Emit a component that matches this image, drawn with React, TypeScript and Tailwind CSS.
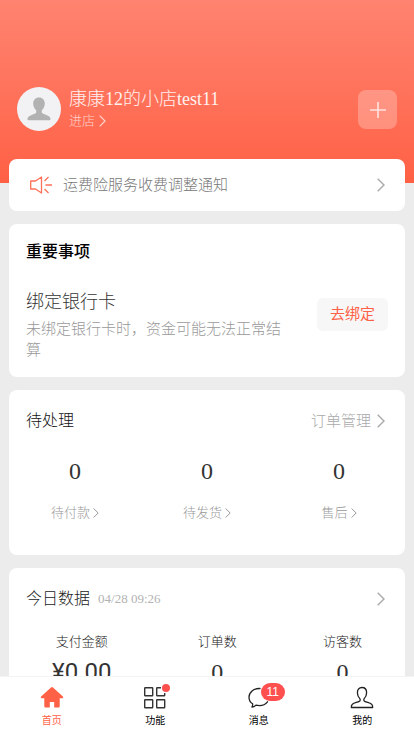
import type { ReactNode } from "react";

const pending = ["待付款", "待发货", "售后"];

function Chevron({ className }: { className: string }) {
  return (
    <svg viewBox="0 0 8 14" fill="none" stroke="currentColor" className={className}>
      <path d="M0.7 0.7 7 7 0.7 13.3" strokeWidth="1.4" />
    </svg>
  );
}

function Stat({ label, children }: { label: string; children: ReactNode }) {
  return (
    <div className="flex flex-col items-center">
      <span className="text-[13px] leading-5 text-[#222]">{label}</span>
      {children}
    </div>
  );
}

function Tab({
  label,
  active,
  children,
}: {
  label: string;
  active?: boolean;
  children: ReactNode;
}) {
  return (
    <a
      href="#"
      className={
        active
          ? "flex flex-1 flex-col items-center pt-2 text-[#ff6146]"
          : "flex flex-1 flex-col items-center pt-2 text-black"
      }
    >
      <span className="relative h-6 w-6">{children}</span>
      <span className="mt-1 text-[10px] leading-4">{label}</span>
    </a>
  );
}

export default function App() {
  return (
    <div className="flex h-screen flex-col bg-[#ececec] font-['Liberation_Serif','Noto_Sans_CJK_SC',serif] font-light">
      <div className="min-h-0 flex-1 overflow-y-auto [scrollbar-width:none]">
        {/* Shop header */}
        <header className="flex h-[183px] items-start bg-linear-to-b from-[#ff8370] to-[#ff6044] px-[17px] pt-[87px] text-white">
          <span className="flex h-11 w-11 items-center justify-center rounded-full bg-[#f2f2f4]">
            <svg viewBox="0 0 24 24" fill="#b2b2b2" className="h-6 w-6">
              <path d="M12 .5c3.600 0 5.800 2.600 5.800 6.100 0 2.700-1.200 5.300-3 6.600v2.400c0 .8 3.200 1.800 6.200 3.200 1.800.9 2.500 2 2.500 3.500 0 .7-.3 1-.9 1H1.400c-.6 0-.9-.3-.9-1 0-1.500.7-2.600 2.500-3.500 3-1.400 6.200-2.400 6.200-3.200v-2.400c-1.800-1.300-3-3.900-3-6.600C6.200 3.100 8.400.5 12 .5z" />
            </svg>
          </span>
          <div className="ml-2 flex-1">
            <h1 className="text-lg leading-6 text-white/90">康康12的小店test11</h1>
            <a href="#" className="flex items-center gap-1 text-[13px] leading-5 text-white/70">
              进店
              <Chevron className="h-3 w-[7px]" />
            </a>
          </div>
          <button
            aria-label="添加"
            className="mt-[3px] flex h-[39px] w-[39px] items-center justify-center rounded-lg bg-white/25"
          >
            <svg viewBox="0 0 16 16" stroke="#fff" strokeOpacity="0.75" strokeWidth="1.6" className="h-4 w-4">
              <path d="M8 0v16M0 8h16" />
            </svg>
          </button>
        </header>

        <main className="-mt-6 flex flex-col gap-[13px] px-[9px]">
          {/* Notice */}
          <a href="#" className="flex h-[52px] items-center rounded-lg bg-white px-5">
            <svg viewBox="0 0 24 18" fill="none" stroke="#ff7058" strokeWidth="1.3" className="h-[18px] w-6">
              <path d="M1.700 5h4.800L12.500 1v16L6.500 13H1.700z" strokeLinejoin="round" />
              <path d="M16.500 9H23M15.500 5l4-4M15.500 13l4 4" />
            </svg>
            <span className="ml-[10px] flex-1 text-[15px] leading-5 text-[#777]">
              运费险服务收费调整通知
            </span>
            <Chevron className="h-[14px] w-2 text-[#aaa]" />
          </a>

          {/* Important items */}
          <section className="rounded-lg bg-white px-[17px] py-4">
            <h2 className="text-base leading-6 font-medium text-black">重要事项</h2>
            <div className="mt-6 flex items-start justify-between">
              <div className="w-[264px]">
                <h3 className="text-lg leading-7 text-[#333]">绑定银行卡</h3>
                <p className="mt-[3px] text-[15px] leading-[21px] text-[#999]">
                  未绑定银行卡时，资金可能无法正常结算
                </p>
              </div>
              <button className="mt-[10px] h-[33px] w-[71px] rounded-md bg-[#f7f7f7] text-[15px] font-normal text-[#ff6146]">
                去绑定
              </button>
            </div>
          </section>

          {/* Pending orders */}
          <section className="rounded-lg bg-white pt-[19px] pb-8">
            <div className="flex items-center justify-between pr-5 pl-[17px]">
              <h2 className="text-base leading-6 text-[#111]">待处理</h2>
              <a href="#" className="flex items-center gap-[6px] text-[15px] leading-6 text-[#aaa]">
                订单管理
                <Chevron className="h-[14px] w-2" />
              </a>
            </div>
            <div className="mt-[23px] grid grid-cols-3">
              {pending.map((label) => (
                <a key={label} href="#" className="flex flex-col items-center">
                  <span className="text-2xl leading-[30px] text-[#333]">0</span>
                  <span className="mt-[17px] flex items-center gap-[3px] text-[13px] leading-5 text-[#999]">
                    {label}
                    <Chevron className="h-[10px] w-[6px]" />
                  </span>
                </a>
              ))}
            </div>
          </section>

          {/* Today */}
          <section className="rounded-lg bg-white pt-[19px] pb-6">
            <div className="flex items-center pr-5 pl-[17px]">
              <h2 className="text-base leading-6 text-[#222]">今日数据</h2>
              <time className="ml-2 flex-1 text-[13px] leading-6 text-[#b2b2b2]">04/28 09:26</time>
              <Chevron className="h-[14px] w-2 text-[#aaa]" />
            </div>
            <div className="mt-[21px] flex justify-around">
              <Stat label="支付金额">
                <span className="mt-[5px] font-['Roboto',sans-serif] text-2xl leading-[30px] font-normal text-[#333]">
                  ¥0.00
                </span>
              </Stat>
              <Stat label="订单数">
                <span className="mt-[5px] text-2xl leading-[30px] text-[#333]">0</span>
              </Stat>
              <Stat label="访客数">
                <span className="mt-[5px] text-2xl leading-[30px] text-[#333]">0</span>
              </Stat>
            </div>
          </section>
        </main>
      </div>

      {/* Tab bar */}
      <nav className="flex h-[60px] shrink-0 border-t border-[#f4f4f4] bg-white font-normal">
        <Tab label="首页" active>
          <svg viewBox="0 0 24 24" fill="currentColor" className="h-6 w-6">
            <path d="M11 2.400a1.500 1.500 0 0 1 2 0l9.900 9.200c.6.600.3 1.600-.6 1.600h-2.600V21c0 1-.5 1.500-1.500 1.500h-4V17h-4.400v5.500h-4c-1 0-1.500-.5-1.500-1.500v-7.800H1.700c-.9 0-1.200-1-.6-1.600z" />
          </svg>
        </Tab>
        <Tab label="功能">
          <svg viewBox="0 0 24 24" fill="none" stroke="#333" strokeWidth="1.4" className="h-6 w-6">
            <rect x="1.700" y="2.700" width="8" height="8" rx="0.5" />
            <rect x="1.700" y="14.700" width="8" height="8" rx="0.5" />
            <rect x="13.700" y="14.700" width="8" height="8" rx="0.5" />
            <path d="M18 2.700h-3.800a.5.500 0 0 0-.5.500v7a.5.500 0 0 0 .5.500h7a.5.500 0 0 0 .5-.5V8" />
          </svg>
          <span className="absolute -top-px left-[19px] h-2 w-2 rounded-full bg-[#ff5050]" />
        </Tab>
        <Tab label="消息">
          <svg viewBox="0 0 24 24" fill="none" stroke="#222" strokeWidth="1.300" strokeLinecap="round" strokeLinejoin="round" className="h-6 w-6">
            <path d="M13 3.500C6.500 3.200 2 7.300 2 12.200c0 2.800 1.200 5.100 3.600 6.600.4 1-.1 2-.7 3.200 1.500-.2 2.900-.800 4-1.900 5.100 1.200 9.200-.3 11.600-3.300" />
          </svg>
          <span className="absolute -top-[2px] left-[14px] flex h-[18px] w-6 items-center justify-center rounded-full bg-[#ff5050] font-['Liberation_Sans',sans-serif] text-xs text-white">
            11
          </span>
        </Tab>
        <Tab label="我的">
          <svg viewBox="0 0 24 24" fill="none" stroke="#222" strokeWidth="1.300" strokeLinejoin="round" className="h-6 w-6">
            <path d="M12 2.500c3 0 4.600 2.300 4.600 5.200 0 2.600-1.100 4.500-2.400 5.900-.7.900-.5 2.200.5 2.700 2.100 1.100 5.200 1.600 6.900 2.900.8.700 1.100 1.600 1.100 3.300H1.300c0-1.700.3-2.600 1.100-3.300 1.700-1.300 4.800-1.800 6.900-2.900 1-.5 1.200-1.800.5-2.700-1.300-1.400-2.400-3.300-2.400-5.900 0-2.900 1.600-5.200 4.600-5.200z" />
          </svg>
        </Tab>
      </nav>
    </div>
  );
}
